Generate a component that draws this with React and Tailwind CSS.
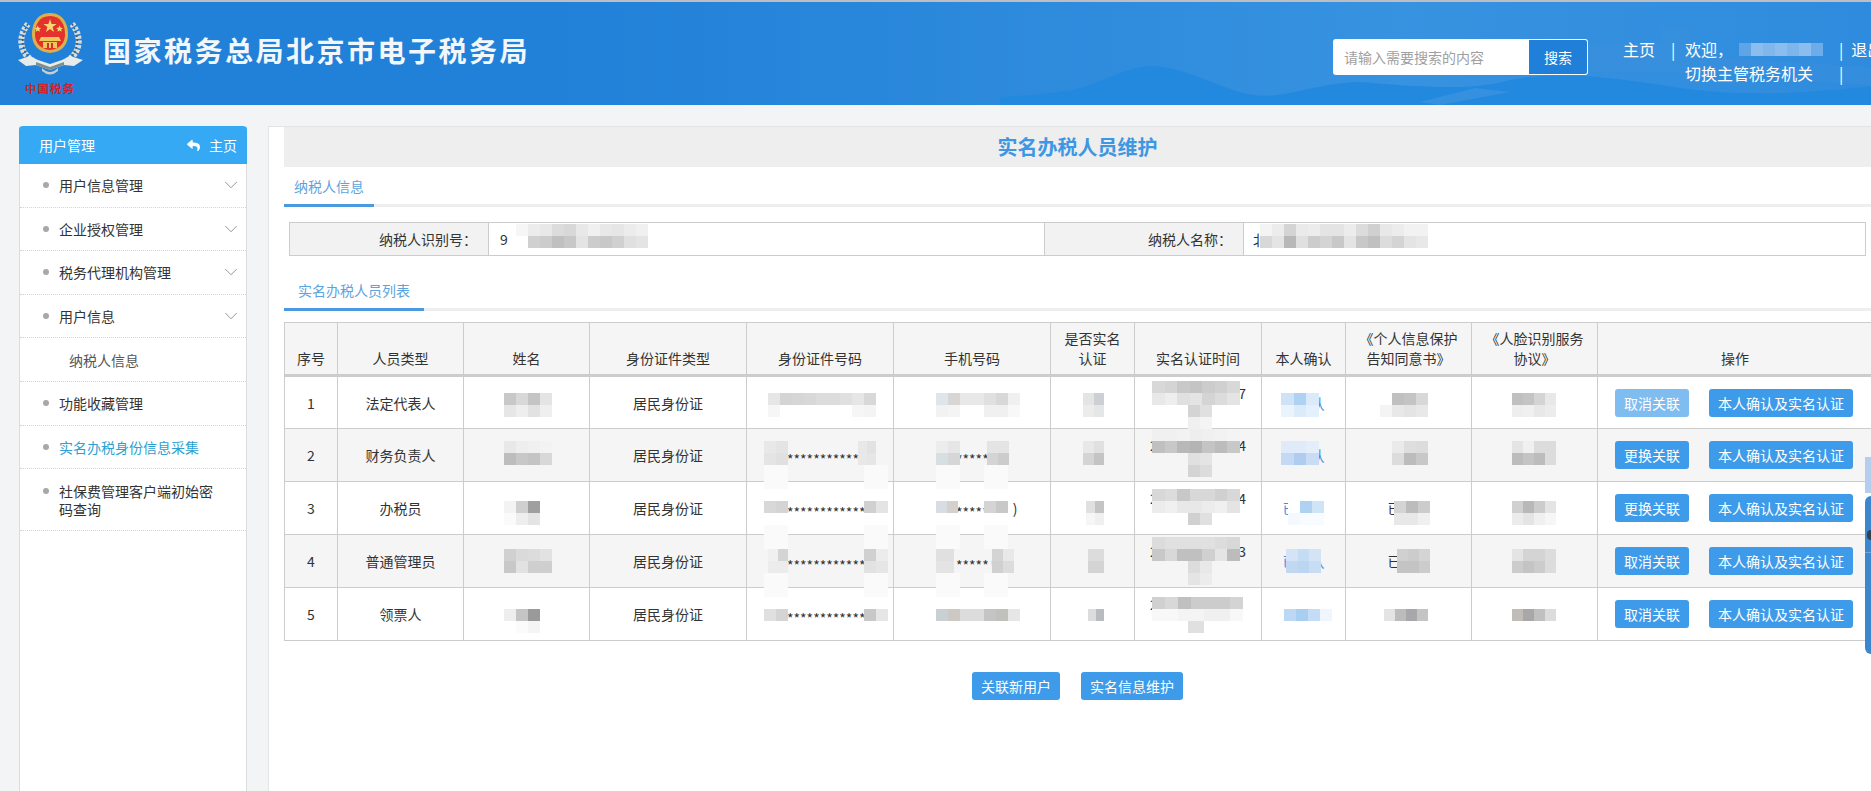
import React from 'react';
import { ChevronDown } from 'lucide-react';
import { FaReply } from 'react-icons/fa';

const fontStack = 'font-["Noto_Sans_CJK_SC","Noto_Sans",sans-serif]';

const menu = [
  { label: '用户信息管理', arrow: true },
  { label: '企业授权管理', arrow: true },
  { label: '税务代理机构管理', arrow: true },
  { label: '用户信息', arrow: true },
  { label: '纳税人信息', sub: true },
  { label: '功能收藏管理' },
  { label: '实名办税身份信息采集', active: true },
  { label: '社保费管理客户端初始密码查询', tall: true },
];

const headers = [
  ['序号'], ['人员类型'], ['姓名'], ['身份证件类型'], ['身份证件号码'], ['手机号码'],
  ['是否实名', '认证'], ['实名认证时间'], ['本人确认'],
  ['《个人信息保护', '告知同意书》'], ['《人脸识别服务', '协议》'], ['操作'],
];

const colWidths = [53, 126, 126, 157, 147, 157, 84, 127, 84, 126, 126, 275];

const rows = [
  { no: 1, type: '法定代表人', id: '', phone: '', last: '7', first: '', confirm: '已确认', agreed: '', action: '取消关联', faded: true },
  { no: 2, type: '财务负责人', id: '************', phone: '*****', last: '4', first: '2', confirm: '已确认', agreed: '', action: '更换关联' },
  { no: 3, type: '办税员', id: '*************', phone: '*****', tail: ')', tailClass: 'ml-[24px]', last: '4', first: '2', confirm: '已确认', agreed: '已同意', action: '更换关联' },
  { no: 4, type: '普通管理员', id: '*************', phone: '*****', tail: '(', tailClass: 'ml-[2px]', last: '3', first: '2', confirm: '已确认', agreed: '已同意', action: '取消关联' },
  { no: 5, type: '领票人', id: '*************', phone: '*****', last: '', first: '2', confirm: '', agreed: '', action: '取消关联' },
];

// redaction mosaics, page coordinates, 12px tiles
const p = (x, y, tiles, w = 12) => ({ x, y, tiles, w });
const patches = [
  // 姓名
  p(504, 392, [['c8', 'd8', 'c4', 'e4'], ['e6', 'ee', 'e2', 'ef']]),
  p(504, 440, [['e8', 'ee', 'f0', 'f3'], ['bd', 'c8', 'c4', 'd8']]),
  p(504, 500, [['f3', 'cf', '9f'], ['fa', 'ee', 'e4']]),
  p(504, 548, [['d0', 'da', 'dc', 'e2'], ['c8', 'e2', 'cf', 'cf']]),
  p(504, 608, [['ee', 'c4', '9a'], ['ff', 'fb', 'f5']]),
  // 身份证件号码
  p(768, 392, [['e6', 'd4', 'd6', 'd8', 'dc', 'dc', 'e0', 'e6', 'd8']]),
  p(768, 404, [['f6', 'ff', 'ff', 'ff', 'ff', 'ff', 'ff', 'f6', 'f4']]),
  p(764, 440, [['e8', 'e4'], ['e4', 'e0']]),
  p(858, 440, [['e8', 'e2'], ['e8', 'e6']], 9),
  p(764, 500, [['d8', 'd4']]),
  p(864, 500, [['d0', 'e4']]),
  p(768, 548, [['f0', 'd4'], ['ec', 'ec']], 10),
  p(864, 548, [['d0', 'ec'], ['e2', 'e6']]),
  p(764, 608, [['e0', 'd4']]),
  p(864, 608, [['c8', 'e6']]),
  p(764, 464, [['fa', 'fa'], ['fa', 'fa']]),
  p(864, 464, [['fa', 'fa'], ['fa', 'fa']]),
  p(764, 524, [['fa', 'fa'], ['fa', 'fa']]),
  p(864, 524, [['fa', 'fa'], ['fa', 'fa']]),
  p(764, 572, [['fa', 'fa'], ['fa', 'fa']]),
  p(864, 572, [['fa', 'fa'], ['fa', 'fa']]),
  // 手机号码
  p(936, 392, [['dfe6ea', 'd8d6d4', 'e8', 'e8', 'e0', 'd8', 'f0']]),
  p(936, 404, [['f2', 'f4', 'ff', 'ff', 'f0', 'f0', 'f8']]),
  p(936, 440, [['ec', 'e6'], ['d8dfe2', 'd6']]),
  p(987, 440, [['e4', 'e4'], ['d4', 'cc']], 11),
  p(936, 500, [['d8dde4', 'd4d0cc']], 11),
  p(984, 500, [['d4', 'c8']]),
  p(936, 548, [['e0'], ['e4']], 18),
  p(992, 548, [['d4', 'e8'], ['d0', 'dc']], 11),
  p(936, 608, [['c8d0d4', 'ccc8c4', 'dc', 'dc', 'c4', 'c0c0bc', 'e6']]),
  p(936, 464, [['fa', 'fa'], ['fa', 'fa']]),
  p(984, 464, [['fa', 'fa'], ['fa', 'fa']]),
  p(936, 524, [['fa', 'fa'], ['fa', 'fa']]),
  p(984, 524, [['fa', 'fa'], ['fa', 'fa']]),
  p(936, 572, [['fa', 'fa'], ['fa', 'fa']]),
  p(984, 572, [['fa', 'fa'], ['fa', 'fa']]),
  // 是否实名认证
  p(1083, 392, [['e4', 'ccd0d4'], ['ec', 'e4e6e8']], 10.5),
  p(1083, 440, [['e8', 'e0'], ['d4', 'c4']], 10.5),
  p(1086, 500, [['e0', 'c4'], ['f6', 'f0']], 9),
  p(1088, 548, [['dc', 'dc'], ['d4', 'd4']], 8),
  p(1088, 608, [['dc', 'b8bcc0']], 8),
  // 实名认证时间
  p(1152, 380, [['d8', 'd4', 'c8', 'c4', 'cc', 'd0', 'd8'], ['e8', 'ee', 'e0', 'e4', 'd4', 'dc', 'e4']], 12.5),
  p(1188, 404, [['d4', 'e0'], ['f0', 'f4']]),
  p(1152, 428, [['f0', 'f0', 'f2', 'ee', 'f0', 'f2', 'f4']], 12.5),
  p(1152, 440, [['c0', 'c8', 'b8', 'b4', 'c4', 'bc', 'c8']], 12.5),
  p(1188, 452, [['e0', 'e4'], ['d4', 'dc']]),
  p(1152, 488, [['d8', 'dc', 'c8', 'd8', 'd8', 'd0', 'd8'], ['ec', 'f0', 'e8', 'e8', 'ec', 'f0', 'e4']], 12.5),
  p(1188, 512, [['d0', 'e0']]),
  p(1152, 536, [['dc', 'e0', 'e0', 'e0', 'e0', 'dc', 'd8'], ['c8', 'd8', 'c0', 'c0', 'd0', 'e4', 'bc']], 12.5),
  p(1188, 560, [['dc', 'e8'], ['e4', 'ec']]),
  p(1152, 596, [['d0', 'd8', 'c0', 'cc', 'cc', 'cc', 'd4'], ['f8', 'f8', 'f4', 'f4', 'f0', 'f0', 'f8']], 13),
  p(1188, 620, [['e0']], 16),
  // 本人确认
  p(1281, 392, [['cfe3f8', 'b0d2f2', 'dbeafa'], ['eaf4fd', 'dcebf9', 'e4f0fb']], 12.5),
  p(1281, 440, [['dfebf8', 'dfebf8', 'e4eefa'], ['c4daf4', 'aecdf0', 'c8dcf4']], 12.5),
  p(1288, 500, [['ffffff', 'b0d2f2', 'd0e4f8'], ['f4f9fe', 'f8fbff', 'f8fbff']], 12),
  p(1286, 548, [['d4e4f6', 'c4dcf4', 'd4e4f6'], ['c0d8f2', 'bcd6f2', 'c8dcf4']], 11.5),
  p(1284, 608, [['bcd8f4', 'a8cef2', 'c4dcf6', 'f0f6fd']]),
  // 个人信息保护告知同意书
  p(1392, 392, [['c0', 'c4', 'd8'], ['e8', 'e4', 'e8']]),
  p(1380, 392, [['ff'], ['f4']]),
  p(1392, 440, [['ea', 'de', 'dc'], ['dc', 'bc', 'c8']]),
  p(1394, 500, [['d4', 'bc', 'cc'], ['e8', 'e8', 'f0']], 12),
  p(1397, 548, [['d0', 'cc', 'd4'], ['c4', 'c4', 'cc']], 11),
  p(1384, 608, [['e4', 'bc', 'a8a8ac', 'c4']], 11),
  // 人脸识别服务协议
  p(1512, 392, [['c0', 'c4', 'd4', 'e8'], ['ee', 'f0', 'e8', 'ec']], 11),
  p(1512, 440, [['e4', 'f0', 'dc', 'dc'], ['bc', 'c4', 'bc', 'dc']], 11),
  p(1512, 500, [['d0', 'b8', 'cc', 'e4'], ['ec', 'e4', 'f0', 'f6']], 11),
  p(1512, 548, [['e4', 'd4', 'd4', 'dc'], ['cc', 'c4', 'cc', 'dc']], 11),
  p(1512, 608, [['c0bcb8', 'a8', 'c0', 'dc']], 11),
];

const hex = (c) => (c.length === 2 ? `#${c}${c}${c}` : `#${c}`);

const Mosaic = ({ x, y, tiles, w }) => (
  <div className="absolute flex flex-col" style={{ left: x, top: y }}>
    {tiles.map((row, i) => (
      <div key={i} className="flex h-3">
        {row.map((c, j) => (
          <div key={j} className="h-3" style={{ width: w, backgroundColor: hex(c) }} />
        ))}
      </div>
    ))}
  </div>
);

const Logo = () => (
  <svg width="70" height="90" viewBox="0 0 70 90" className="shrink-0">
    {/* wreath */}
    <path d="M12 14 C2 26 3 42 16 50" fill="none" stroke="#d9dcdc" strokeWidth="6" strokeDasharray="3 1.5" />
    <path d="M56 14 C66 26 65 42 52 50" fill="none" stroke="#d9dcdc" strokeWidth="6" strokeDasharray="3 1.5" />
    <path d="M12 14 C4 26 5 42 16 50" fill="none" stroke="#4b5a5e" strokeWidth="1.5" strokeDasharray="2 2" />
    <path d="M56 14 C64 26 63 42 52 50" fill="none" stroke="#4b5a5e" strokeWidth="1.5" strokeDasharray="2 2" />
    {/* shield */}
    <path d="M34 3 C47 3 52 14 52 24 C52 35 46 42 34 43 C22 42 16 35 16 24 C16 14 21 3 34 3 Z" fill="#dcb04a" />
    <path d="M34 6 C45 6 49 15 49 24 C49 33 44 39 34 40 C24 39 19 33 19 24 C19 15 23 6 34 6 Z" fill="#e5312c" />
    <path d="M34 9 L35.6 14 L40.6 14 L36.6 17 L38 22 L34 19 L30 22 L31.4 17 L27.4 14 L32.4 14 Z" fill="#f7d774" />
    <path d="M23 15 l1.2 2.5 2.6.2-2 1.7.7 2.5-2.5-1.4-2.3 1.4.6-2.5-2-1.7 2.6-.2Z" fill="#f7d774" transform="translate(1 2) scale(.9)" />
    <path d="M45 15 l1.2 2.5 2.6.2-2 1.7.7 2.5-2.5-1.4-2.3 1.4.6-2.5-2-1.7 2.6-.2Z" fill="#f7d774" transform="translate(3 2) scale(.9)" />
    <path d="M25 27 H43 L45 31 H23 Z M27 32 H41 V38 H27 Z" fill="#f2c65a" />
    <path d="M31 33 H33 V38 H31 Z M35 33 H37 V38 H35 Z" fill="#c9352a" />
    {/* ribbon */}
    <path d="M2 50 L14 46 L22 50 L34 54 L46 50 L54 46 L67 50 L58 56 L48 55 L34 60 L20 55 L10 56 Z" fill="#e7ebea" />
    <path d="M20 52 L34 57 L48 52 L48 55 L34 60 L20 55 Z" fill="#7f8d8c" />
    <path d="M26 58 Q34 66 42 58 L42 61 Q34 68 26 61 Z" fill="#c9cfcc" />
    <text x="34" y="83" textAnchor="middle" fontSize="11.5" fontWeight="700" letterSpacing="1" fill="#d3202a">中国税务</text>
  </svg>
);

const HeaderBackdrop = () => (
  <svg className="absolute inset-0" width="1871" height="103" viewBox="0 0 1871 103" preserveAspectRatio="none">
    <defs>
      <linearGradient id="headerSky" x1="0" x2="1" y1="0" y2="0">
        <stop offset="0.3" stopColor="#2180d8" />
        <stop offset="0.75" stopColor="#3793e0" />
        <stop offset="1" stopColor="#2f8bdd" />
      </linearGradient>
    </defs>
    <rect width="1871" height="103" fill="url(#headerSky)" />
    <path d="M1000 95 C1040 93 1070 90 1090 83 C1110 75 1130 65 1150 64 C1175 64 1205 78 1225 85 C1245 93 1262 96 1285 92 C1310 87 1335 80 1360 80 C1410 84 1470 90 1510 78 C1560 68 1620 76 1680 86 C1750 96 1820 90 1871 84 V103 H1000 Z" fill="#2289de" />
    <path d="M1300 78 C1400 66 1500 72 1560 52 C1590 42 1620 40 1640 42 L1662 40 L1660 24 L1690 26 L1692 50 C1730 60 1800 58 1871 66 V84 C1780 74 1620 66 1500 70 Z" fill="#3a8fdc" opacity="0.55" />
    <path d="M1420 100 L1475 86 L1510 90 L1440 103 Z" fill="#3d94e0" opacity="0.7" />
  </svg>
);

const Header = () => (
  <header className="relative h-[105px] shrink-0 overflow-hidden border-t-2 border-[#bdbdc4]">
    <HeaderBackdrop />
    <div className="relative flex h-full items-start pl-4 pt-2">
      <Logo />
      <h1 className="ml-[17px] mt-[22px] whitespace-nowrap text-[28px] font-bold leading-9 tracking-[2.5px] text-[#f2f7fc]">
        国家税务总局北京市电子税务局
      </h1>
      <div className="absolute left-[1333px] top-[37px] flex h-9 w-[255px]">
        <div className="flex w-[196px] items-center rounded-l-[3px] bg-white pl-[11px] text-sm text-[#a0a0a0]">
          请输入需要搜索的内容
        </div>
        <button className="w-[59px] rounded-r-[3px] border border-l-0 border-white bg-[#1f7fd9] text-sm text-white">
          搜索
        </button>
      </div>
      <div className="absolute left-[1623px] top-[35px] grid grid-cols-[62px_154px_60px] whitespace-nowrap text-base leading-6 text-white">
        <div>主页<span className="ml-[16px]">|</span></div>
        <div className="relative">
          欢迎，
          <div className="absolute left-[54px] top-[6px] flex h-[13px]">
            {['#5fa5e6', '#8bbdee', '#82b7ec', '#8bbdee', '#7eb5ea', '#8bbdee', '#6dace8'].map((c, i) => (
              <div key={i} className="h-[13px] w-3" style={{ backgroundColor: c }} />
            ))}
          </div>
        </div>
        <div>|<span className="ml-[8px]">退出</span></div>
        <div />
        <div>切换主管税务机关</div>
        <div>|</div>
      </div>
    </div>
  </header>
);

const Sidebar = () => (
  <aside className="ml-[19px] mt-[21px] flex w-[228px] shrink-0 flex-col border-x border-[#dcdcdc] bg-white">
    <div className="-mx-px flex h-[38px] items-center justify-between rounded-t-[4px] bg-[#36a9f4] pl-5 pr-[10px] text-sm text-white">
      <span>用户管理</span>
      <span className="flex items-center gap-[8px]">
        <FaReply className="h-[13px] w-[15px]" />
        主页
      </span>
    </div>
    {menu.map((item) => (
      <div
        key={item.label}
        className={`relative border-b border-dotted border-[#d4d4d4] text-sm leading-[18px] ${
          item.tall ? 'h-[62px] pt-[13px]' : 'flex h-[43.6px] items-center'
        } ${item.sub ? 'pl-[49px] text-[#555]' : 'pl-[39px]'} ${item.active ? 'text-[#2e9fd0]' : 'text-[#333]'}`}
      >
        {!item.sub && (
          <span className={`absolute left-[23px] h-[6px] w-[6px] rounded-full bg-[#a8a8a8] ${item.tall ? 'top-[19px]' : 'top-[18px]'}`} />
        )}
        <span className={item.tall ? 'block w-[157px]' : ''}>{item.label}</span>
        {item.arrow && (
          <ChevronDown className="absolute right-[4px] top-[10px] h-[22px] w-[22px] text-[#8c8c8c]" strokeWidth={1} />
        )}
      </div>
    ))}
  </aside>
);

const Tab = ({ label, className }) => (
  <div className="flex h-10 border-b-[3px] border-[#eeeeee]">
    <div className={`-mb-[3px] flex h-10 items-center justify-center border-b-[3px] border-[#4a9ae0] text-sm text-[#5ba4e0] ${className}`}>
      {label}
    </div>
  </div>
);

const InfoTable = () => (
  <div className="ml-[5px] mt-[15px] grid h-[34px] w-[1577px] grid-cols-[199px_555px_200px_623px] border border-[#cccccc] text-sm text-[#333]">
    <div className="flex items-center justify-end border-r border-[#cccccc] bg-[#f2f2f2] pr-[11px]">纳税人识别号：</div>
    <div className="relative flex items-center pl-[11px]">
      9
      <div className="absolute left-[27px] top-[1px]">
        <Mosaic x={0} y={0} w={12} tiles={[
          ['f6', 'ec', 'e8', 'dc', 'd8', 'e8', 'f0', 'e8', 'e6', 'ec', 'f0'],
          ['ff', 'd0', 'cc', 'c0', 'c8', 'e4', 'cc', 'c8', 'd0', 'e0', 'e4'],
        ]} />
      </div>
    </div>
    <div className="flex items-center justify-end border-x border-[#cccccc] bg-[#f2f2f2] pr-[11px]">纳税人名称：</div>
    <div className="relative flex items-center pl-[9px]">
      北
      <div className="absolute left-[16px] top-[1px]">
        <Mosaic x={0} y={0} w={12} tiles={[
          ['f4', 'ec', 'd4', 'ea', 'ec', 'e4', 'e4', 'ec', 'dc', 'd0', 'e8', 'ec', 'f2', 'f2'],
          ['d8', 'e4', 'b8', 'e0', 'cc', 'd4', 'c8', 'e4', 'c8', 'c0', 'dc', 'd4', 'e4', 'e8'],
        ]} />
      </div>
    </div>
  </div>
);

const ActionButton = ({ children, faded }) => (
  <button className={`h-7 whitespace-nowrap rounded-[3px] px-[9px] text-sm text-white ${faded ? 'bg-[#7fbcf0]' : 'bg-[#3d9be9]'}`}>
    {children}
  </button>
);

const PeopleTable = () => (
  <div className="relative mt-[11px] w-[1588px]">
    <table className="w-[1588px] table-fixed border-collapse text-center text-sm leading-5 text-[#333]">
      <colgroup>
        {colWidths.map((w, i) => (
          <col key={i} style={{ width: w }} />
        ))}
      </colgroup>
      <thead>
        <tr className="h-[53px] bg-[#f5f5f5]">
          {headers.map((lines, i) => (
            <th key={i} className="border border-b-[3px] border-[#cccccc] px-1 pb-[6px] align-bottom font-normal">
              {lines.map((l) => (
                <div key={l} className="whitespace-nowrap">{l}</div>
              ))}
            </th>
          ))}
        </tr>
      </thead>
      <tbody>
        {rows.map((r) => (
          <tr key={r.no} className={`h-[53px] ${r.no % 2 === 0 ? 'bg-[#f5f5f5]' : 'bg-white'}`}>
            <td className="border border-[#cccccc]">{r.no}</td>
            <td className="border border-[#cccccc]">{r.type}</td>
            <td className="border border-[#cccccc]" />
            <td className="border border-[#cccccc]">居民身份证</td>
            <td className="border border-[#cccccc]">
              <div className="ml-[40px] whitespace-nowrap text-left translate-y-1">{r.id}</div>
            </td>
            <td className="border border-[#cccccc]">
              <div className="ml-[62px] flex items-center text-left">
                <span className="translate-y-1">{r.phone}</span>
                <span className={r.tailClass}>{r.tail}</span>
              </div>
            </td>
            <td className="border border-[#cccccc]" />
            <td className="border border-[#cccccc]">
              <div className="mx-auto flex w-[96px] justify-between">
                <span>{r.first}</span>
                <span>{r.last}</span>
              </div>
              <div className="h-5" />
            </td>
            <td className="border border-[#cccccc] text-[#3f8fdc]">{r.confirm}</td>
            <td className="border border-[#cccccc]">{r.agreed}</td>
            <td className="border border-[#cccccc]" />
            <td className="border border-[#cccccc]">
              <div className="flex gap-5 pl-[17px]">
                <ActionButton faded={r.faded}>{r.action}</ActionButton>
                <ActionButton>本人确认及实名认证</ActionButton>
              </div>
            </td>
          </tr>
        ))}
      </tbody>
    </table>
    <div className="pointer-events-none absolute inset-0">
      {patches.map((m, i) => (
        <Mosaic key={i} x={m.x - 284} y={m.y - 321} tiles={m.tiles} w={m.w} />
      ))}
    </div>
  </div>
);

export default function App() {
  return (
    <div className={`relative flex h-[791px] w-[1871px] flex-col overflow-hidden bg-[#f2f4f6] ${fontStack}`}>
      <Header />
      <div className="flex min-h-0 flex-1">
        <Sidebar />
        <main className="ml-[21px] mt-[21px] min-w-0 flex-1 overflow-hidden border-t border-l border-[#e4e4e4] bg-white pl-[15px]">
          <div className="flex h-10 items-center justify-center bg-[#eeeeee] text-xl font-bold text-[#3d97e2]">
            实名办税人员维护
          </div>
          <Tab label="纳税人信息" className="w-[90px]" />
          <InfoTable />
          <div className="mt-[15px]">
            <Tab label="实名办税人员列表" className="w-[140px]" />
          </div>
          <PeopleTable />
          <div className="mt-[31px] flex justify-center gap-[21px]">
            <ActionButton>关联新用户</ActionButton>
            <ActionButton>实名信息维护</ActionButton>
          </div>
        </main>
      </div>
      {/* floating widget clipped at the right edge */}
      <div className="absolute right-0 top-[457px] h-9 w-[6px] bg-[#b4cfee]" />
      <div className="absolute right-0 top-[496px] h-[158px] w-[6px] rounded-l-lg bg-[#3a87cf]">
        <div className="absolute right-0 top-[34px] h-[10px] w-1 rounded-l-full bg-[#33404f]" />
        <div className="absolute right-0 top-[56px] h-px w-[6px] bg-[#6aa6de]" />
      </div>
    </div>
  );
}
